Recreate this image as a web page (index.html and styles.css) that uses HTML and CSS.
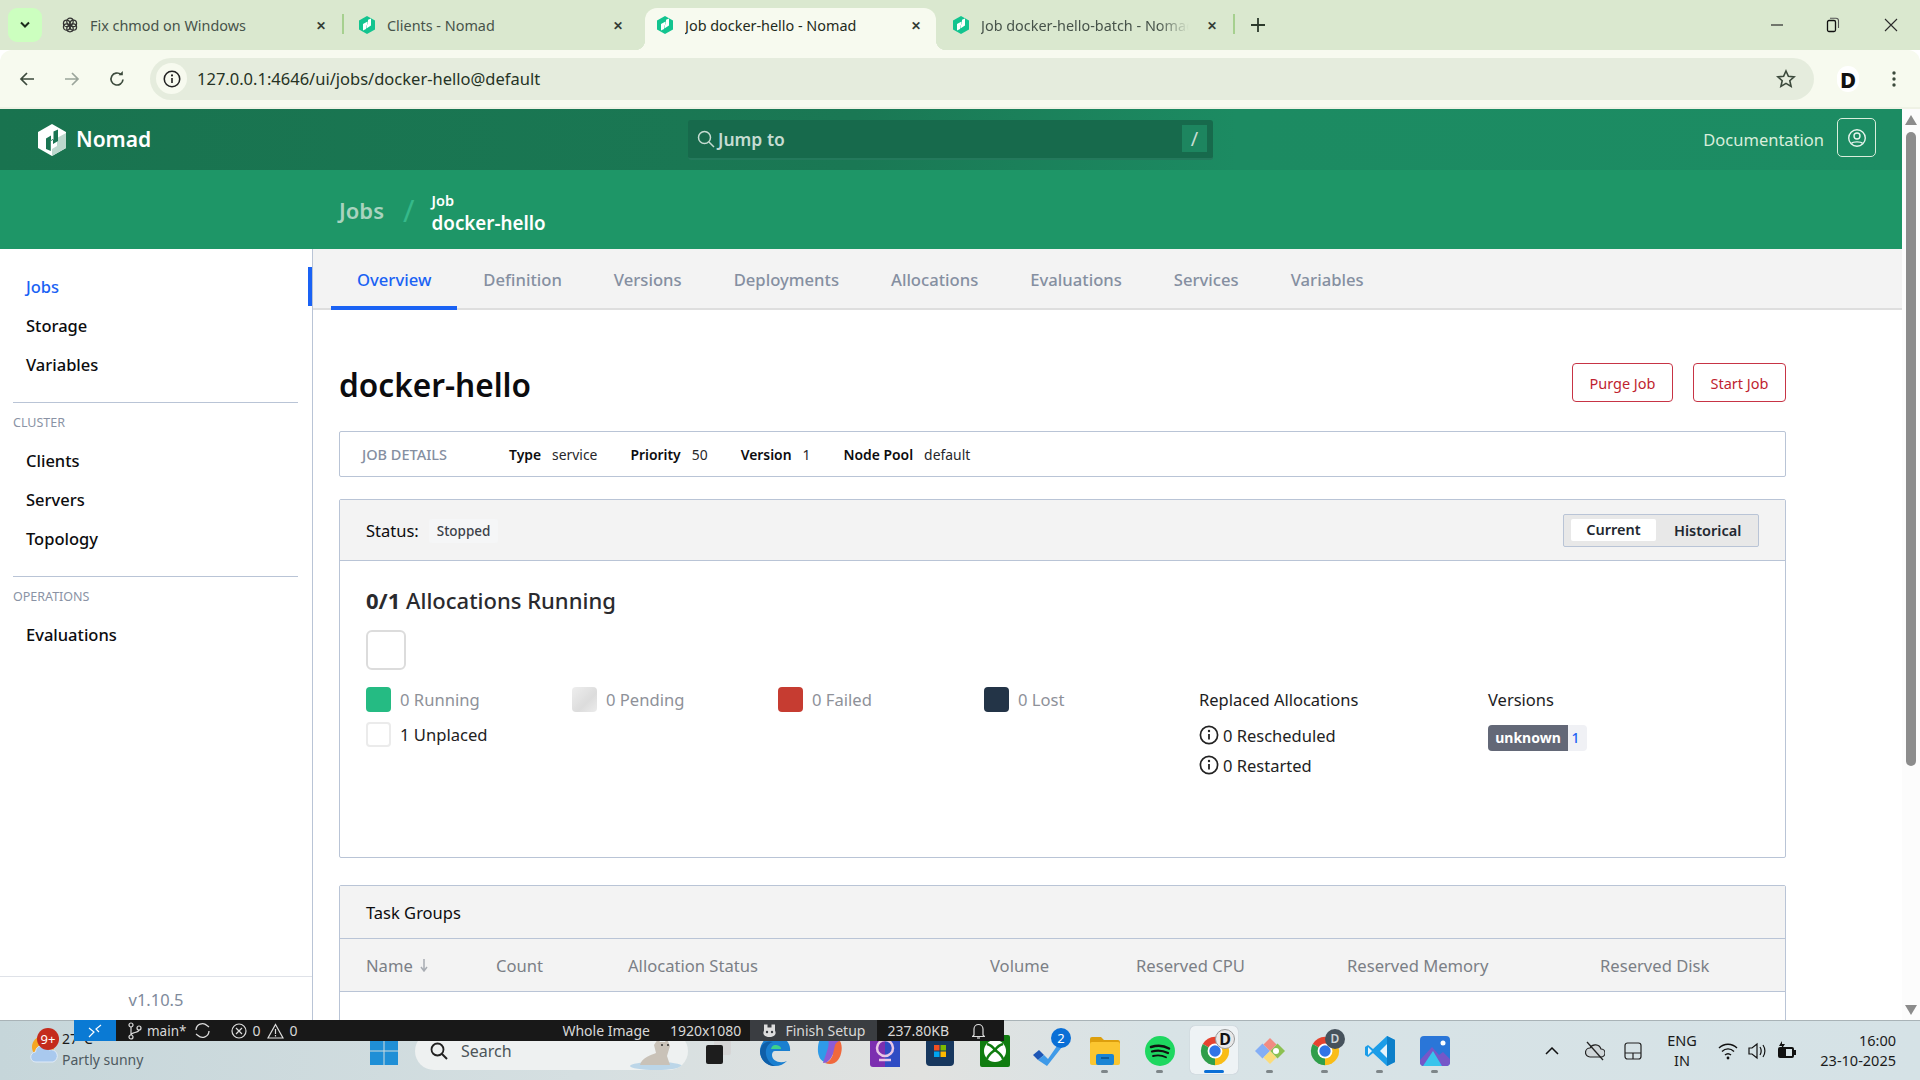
FILE: index.html
```html
<!DOCTYPE html>
<html lang="en">
<head>
  <meta charset="UTF-8" />
  <title>Job docker-hello - Nomad</title>
  <link rel="stylesheet" href="styles.css">
</head>
<body>

  <svg class="sprite" width="0" height="0">
    <symbol id="fav" viewBox="0 0 16 18">
      <polygon points="8,0 16,4.5 16,13.5 8,18 0,13.5 0,4.5" fill="#12c48f"/>
      <path d="M4 14.5V8L8.6 5.4V8.6L9 8.4V3.8L12 2.6V9.5L7.4 12.4V9.3L7 9.5V13Z" fill="#fff"/>
    </symbol>
    <symbol id="chrome" viewBox="0 0 48 48">
      <path d="M24 24L6.7 14A20 20 0 0 1 41.3 14Z" fill="#e5432f"/>
      <path d="M24 24L24 44A20 20 0 0 1 6.7 14Z" fill="#2f9e4a"/>
      <path d="M24 24L41.3 14A20 20 0 0 1 24 44Z" fill="#f9bd17"/>
      <circle cx="24" cy="24" r="10.5" fill="#fff"/>
      <circle cx="24" cy="24" r="8" fill="#2f74e6"/>
    </symbol>
    <symbol id="info" viewBox="0 0 20 20">
      <circle cx="10" cy="10" r="8.6" fill="none" stroke="currentColor" stroke-width="1.7"/>
      <path d="M10 9v5.5" stroke="currentColor" stroke-width="1.8"/>
      <circle cx="10" cy="6" r="1.2" fill="currentColor"/>
    </symbol>
  </svg>

  <header class="tabstrip">
    <button class="tab-search">
      <svg width="12" height="8" viewBox="0 0 12 8"><path d="M2 1.5l4 4 4-4" fill="none" stroke="#1c2b1c" stroke-width="2"/></svg>
    </button>
    <div class="tab tab-sep">
      <svg class="tab-icon" viewBox="0 0 20 20"><g fill="none" stroke="#333" stroke-width="1.6"><circle cx="10" cy="5.5" r="4"/><circle cx="5.8" cy="8" r="4"/><circle cx="5.8" cy="12.5" r="4"/><circle cx="10" cy="14.5" r="4"/><circle cx="14.2" cy="12.5" r="4"/><circle cx="14.2" cy="8" r="4"/></g></svg>
      <span class="tab-title">Fix chmod on Windows</span>
      <span class="tab-close">✕</span>
    </div>
    <div class="tab">
      <svg class="tab-icon"><use href="#fav"/></svg>
      <span class="tab-title">Clients - Nomad</span>
      <span class="tab-close">✕</span>
    </div>
    <div class="tab tab-active">
      <svg class="tab-icon"><use href="#fav"/></svg>
      <span class="tab-title">Job docker-hello - Nomad</span>
      <span class="tab-close">✕</span>
    </div>
    <div class="tab tab-sep">
      <svg class="tab-icon"><use href="#fav"/></svg>
      <span class="tab-title tab-fade">Job docker-hello-batch - Nomad</span>
      <span class="tab-close">✕</span>
    </div>
    <svg class="tab-new" width="14" height="14" viewBox="0 0 14 14"><path d="M7 0v14M0 7h14" stroke="#2c3a2c" stroke-width="1.8"/></svg>
    <div class="win-controls">
      <svg class="win-min" width="14" height="14" viewBox="0 0 14 14"><path d="M1 7h12" stroke="#2a2a2a" stroke-width="1.2"/></svg>
      <svg width="14" height="16" viewBox="0 0 14 16"><rect x="1.5" y="3.5" width="8" height="11" rx="1.5" fill="none" stroke="#111" stroke-width="1.3"/><path d="M4 1.2h6a2.5 2.5 0 0 1 2.5 2.5V11" fill="none" stroke="#555" stroke-width="1.1"/></svg>
      <svg class="win-close" width="14" height="14" viewBox="0 0 14 14"><path d="M1 1l12 12M13 1L1 13" stroke="#2a2a2a" stroke-width="1.1"/></svg>
    </div>
  </header>

  <div class="toolbar">
    <svg class="tool" width="18" height="18" viewBox="0 0 18 18"><path d="M16 9H3M9 3L3 9l6 6" fill="none" stroke="#3c4a3c" stroke-width="1.7"/></svg>
    <svg class="tool" width="18" height="18" viewBox="0 0 18 18"><path d="M2 9h13M9 3l6 6-6 6" fill="none" stroke="#9ba59b" stroke-width="1.7"/></svg>
    <svg class="tool" width="18" height="18" viewBox="0 0 18 18"><path d="M15 9.5A6 6 0 1 1 13 4.5" fill="none" stroke="#3c4a3c" stroke-width="1.7"/><path d="M10.5 5.2h4.3V1z" fill="#3c4a3c"/></svg>
    <div class="urlbar">
      <span class="url-info"><svg width="18" height="18"><use href="#info"/></svg></span>
      <span class="url-text">127.0.0.1:4646/ui/jobs/docker-hello@default</span>
      <svg class="url-star" width="20" height="20" viewBox="0 0 20 20"><path d="M10 2l2.4 5.3 5.7.6-4.3 3.8 1.3 5.7-5.1-3-5.1 3 1.3-5.7L1.9 7.9l5.7-.6z" fill="none" stroke="#3c4a3c" stroke-width="1.6"/></svg>
    </div>
    <span class="profile">D</span>
    <svg class="menu-dots" width="4" height="18" viewBox="0 0 4 18"><circle cx="2" cy="3" r="1.7" fill="#3c4a3c"/><circle cx="2" cy="9" r="1.7" fill="#3c4a3c"/><circle cx="2" cy="15" r="1.7" fill="#3c4a3c"/></svg>
  </div>

  <div class="viewport">
    <div class="app">
      <nav class="topnav">
        <div class="brand">
          <svg width="28" height="32" viewBox="0 0 28 32">
            <polygon points="14,0 28,8 28,24 14,32 0,24 0,8" fill="#fff"/>
            <polygon points="14,32 28,24 28,9 19,14 19,22 14,25" fill="#bcd8cd"/>
            <path d="M8 25V14.5L13 11.5V17L15.5 15.5V7.5L20 5.5V17L15 20V15L12.8 16.3V27Z" fill="#1a7452"/>
          </svg>
          <span class="brand-name">Nomad</span>
        </div>
        <div class="jump">
          <svg width="18" height="18" viewBox="0 0 18 18"><circle cx="7.5" cy="7.5" r="6" fill="none" stroke="#c6dcd2" stroke-width="1.5"/><path d="M12 12l5 5" stroke="#c6dcd2" stroke-width="1.5"/></svg>
          <span class="jump-label">Jump to</span>
          <span class="jump-key">/</span>
        </div>
        <a class="doc-link">Documentation</a>
        <button class="user-btn">
          <svg width="20" height="20" viewBox="0 0 20 20"><g fill="none" stroke="#e6f3ec" stroke-width="1.4"><circle cx="10" cy="10" r="8.3"/><circle cx="10" cy="8" r="3"/><path d="M4.5 15.5c1.5-2.2 9.5-2.2 11 0"/></g></svg>
        </button>
      </nav>

      <div class="crumbs">
        <span class="crumb-root">Jobs</span>
        <span class="crumb-slash">/</span>
        <div class="crumb-current">
          <span class="crumb-kind">Job</span>
          <span class="crumb-name">docker-hello</span>
        </div>
      </div>

      <div class="columns">
        <aside class="sidebar">
          <div class="side-links">
            <a class="side-link is-active">Jobs</a>
            <a class="side-link">Storage</a>
            <a class="side-link">Variables</a>
            <div class="side-rule"></div>
            <p class="side-label">CLUSTER</p>
            <a class="side-link">Clients</a>
            <a class="side-link">Servers</a>
            <a class="side-link">Topology</a>
            <div class="side-rule"></div>
            <p class="side-label">OPERATIONS</p>
            <a class="side-link">Evaluations</a>
          </div>
          <div class="side-version">v1.10.5</div>
        </aside>

        <main class="main">
          <div class="tabs">
            <a class="tabs-item is-active">Overview</a>
            <a class="tabs-item">Definition</a>
            <a class="tabs-item">Versions</a>
            <a class="tabs-item">Deployments</a>
            <a class="tabs-item">Allocations</a>
            <a class="tabs-item">Evaluations</a>
            <a class="tabs-item">Services</a>
            <a class="tabs-item">Variables</a>
          </div>

          <section class="content">
            <div class="title-row">
              <h1>docker-hello</h1>
              <button class="btn-danger">Purge Job</button>
              <button class="btn-danger">Start Job</button>
            </div>

            <div class="details">
              <span class="details-label">JOB DETAILS</span>
              <span class="pair"><b>Type</b>service</span>
              <span class="pair"><b>Priority</b>50</span>
              <span class="pair"><b>Version</b>1</span>
              <span class="pair"><b>Node Pool</b>default</span>
            </div>

            <div class="card status-card">
              <div class="card-head status-head">
                <span>Status:</span>
                <span class="status-badge">Stopped</span>
                <div class="toggle">
                  <span class="toggle-on">Current</span>
                  <span class="toggle-off">Historical</span>
                </div>
              </div>
              <div class="card-body">
                <h3><b>0/1</b> Allocations Running</h3>
                <div class="alloc-bar"></div>
                <div class="legend">
                  <div class="legend-grid">
                    <div class="legend-item"><i class="swatch running"></i>0 Running</div>
                    <div class="legend-item"><i class="swatch pending"></i>0 Pending</div>
                    <div class="legend-item"><i class="swatch failed"></i>0 Failed</div>
                    <div class="legend-item"><i class="swatch lost"></i>0 Lost</div>
                    <div class="legend-item is-on"><i class="swatch unplaced"></i>1 Unplaced</div>
                  </div>
                  <div class="replaced">
                    <div class="legend-title">Replaced Allocations</div>
                    <div class="replaced-row"><svg width="20" height="20"><use href="#info"/></svg>0 Rescheduled</div>
                    <div class="replaced-row"><svg width="20" height="20"><use href="#info"/></svg>0 Restarted</div>
                  </div>
                  <div class="versions">
                    <div class="legend-title">Versions</div>
                    <div class="version-tag"><span class="version-name">unknown</span><span class="version-count">1</span></div>
                  </div>
                </div>
              </div>
            </div>

            <div class="card task-card">
              <div class="card-head task-head">Task Groups</div>
              <div class="task-cols">
                <span>Name <svg class="sort-arrow" width="8" height="13" viewBox="0 0 8 13"><path d="M4 0v11M1 8l3 4 3-4" fill="none" stroke="#a8acb3" stroke-width="1.5"/></svg></span>
                <span>Count</span>
                <span>Allocation Status</span>
                <span>Volume</span>
                <span>Reserved CPU</span>
                <span>Reserved Memory</span>
                <span>Reserved Disk</span>
              </div>
            </div>
          </section>
        </main>
      </div>
    </div>

    <div class="scrollbar">
      <i class="arrow-up"></i>
      <div class="scroll-thumb"></div>
      <i class="arrow-down"></i>
    </div>
  </div>

  <footer class="taskbar">
    <div class="weather">
      <svg width="32" height="30" viewBox="0 0 32 30"><circle cx="15" cy="12" r="11" fill="#f5a623"/><path d="M8 27a5 5 0 0 1-.5-10A7 7 0 0 1 21 15a5.5 5.5 0 0 1 4 12z" fill="#a9c9ee" stroke="#dfeaf7"/></svg>
      <div class="weather-text">
        <span>27°C</span>
        <span class="weather-sub">Partly sunny</span>
      </div>
      <span class="weather-badge">9+</span>
    </div>

    <div class="task-center">
      <div class="task-app">
        <svg width="28" height="28" viewBox="0 0 28 28"><g fill="#1f8fd6"><rect width="13.5" height="13.5"/><rect x="14.5" width="13.5" height="13.5"/><rect y="14.5" width="13.5" height="13.5"/><rect x="14.5" y="14.5" width="13.5" height="13.5"/></g></svg>
      </div>
      <div class="search-pill">
        <svg width="18" height="18" viewBox="0 0 18 18"><circle cx="7.5" cy="7.5" r="6" fill="none" stroke="#222" stroke-width="1.8"/><path d="M12 12l5 5" stroke="#222" stroke-width="2"/></svg>
        <span>Search</span>
        <svg class="search-art" width="56" height="38" viewBox="0 0 56 38"><ellipse cx="30" cy="34" rx="26" ry="4" fill="#bcd6e8"/><path d="M14 33c2-8 12-10 16-12l-2-8 4-6 2 3h5l2-3 3 7-3 10 3 9z" fill="#c9c2b8"/><circle cx="36" cy="13" r="1" fill="#333"/><circle cx="42" cy="13" r="1" fill="#333"/></svg>
      </div>
      <div class="task-app task-view">
        <svg width="28" height="28" viewBox="0 0 28 28"><rect x="10" y="1" width="17" height="17" rx="2" fill="#d6d6d6"/><rect x="2" y="8" width="17" height="19" rx="2" fill="#1d1d1d"/></svg>
      </div>
      <div class="task-icons">
        <div class="task-app">
          <svg width="32" height="32" viewBox="0 0 32 32"><path d="M16 1C7 1 1 8 1 16c0 9 7 15 15 15 5 0 9-2 12-5-7 3-15 0-15-6 0-2 1-4 3-4h15c1-8-5-15-15-15z" fill="#1a7fd0"/><path d="M1 16C2 8 9 5 14 7c-4 1-6 4-7 8-1 7 3 13 9 16C8 31 1 25 1 16z" fill="#0f5fa8"/><path d="M16 10c3 0 6 1 6 4H12c1-3 2-4 4-4z" fill="#3fd18a"/></svg>
        </div>
        <div class="task-app">
          <svg width="30" height="32" viewBox="0 0 30 32"><path d="M5 4c3-3 7-3 10 0 2 2 1 6 0 10l-3 14c-3-1-7-3-8-7-2-5-1-13 1-17z" fill="#2f9be8"/><path d="M12 2c5-2 11 0 13 4l-9 17c-2 3-5 5-8 5l5-15c1-4 1-8-1-11z" fill="#8b5cd6"/><path d="M25 6c3 5 2 14-2 19-3 4-8 5-13 3 4-1 7-5 8-9l2-9c1-2 3-4 5-4z" fill="#f0683c"/></svg>
        </div>
        <div class="task-app">
          <svg width="30" height="32" viewBox="0 0 30 32"><rect width="30" height="32" rx="3" fill="#7c2fb0"/><rect x="15" width="15" height="32" fill="#2f4cc4"/><circle cx="15" cy="13" r="8" fill="none" stroke="#e8c7e6" stroke-width="2.5"/><path d="M9 25h12" stroke="#e8c7e6" stroke-width="2.5"/></svg>
        </div>
        <div class="task-app">
          <svg width="28" height="30" viewBox="0 0 28 30"><rect y="2" width="28" height="28" rx="4" fill="#17375e"/><rect x="8" y="9" width="5.5" height="5.5" fill="#f25022"/><rect x="14.5" y="9" width="5.5" height="5.5" fill="#7fba00"/><rect x="8" y="15.5" width="5.5" height="5.5" fill="#00a4ef"/><rect x="14.5" y="15.5" width="5.5" height="5.5" fill="#ffb900"/></svg>
        </div>
        <div class="task-app">
          <svg width="30" height="32" viewBox="0 0 30 32"><rect width="30" height="32" rx="2" fill="#107c10"/><circle cx="15" cy="16" r="11" fill="#fff"/><path d="M7 9c4 1 6 3 8 6 2-3 4-5 8-6M7 24c1-4 4-6 8-9 4 3 7 5 8 9" fill="none" stroke="#107c10" stroke-width="2.5"/></svg>
        </div>
        <div class="task-app">
          <svg class="todo-icon" width="30" height="26" viewBox="0 0 30 26"><path d="M1 15l6-5 5 5-6 5z" fill="#1e56b5"/><path d="M6 20l6-5 4 4L27 3l3 4-15 19z" fill="#3f9ae8"/></svg>
          <span class="app-badge app-badge-blue">2</span>
        </div>
        <div class="task-app has-dot">
          <svg width="30" height="28" viewBox="0 0 30 28"><path d="M0 2a2 2 0 0 1 2-2h9l3 3h14a2 2 0 0 1 2 2v4H0z" fill="#dd9f0d"/><rect y="5" width="30" height="23" rx="2" fill="#fbc630"/><rect x="6" y="17" width="18" height="11" rx="2" fill="#1a84d4"/><path d="M11 21h8" stroke="#0d4f86" stroke-width="1.5"/></svg>
        </div>
        <div class="task-app has-dot">
          <svg width="30" height="30" viewBox="0 0 30 30"><circle cx="15" cy="15" r="15" fill="#1ed760"/><g fill="none" stroke="#111" stroke-linecap="round"><path d="M6 11c6-2 13-1.5 18 1.5" stroke-width="2.5"/><path d="M7 15.5c5-1.5 11-1 16 1.5" stroke-width="2.2"/><path d="M8 20c5-1.2 9-.8 13 1.3" stroke-width="1.8"/></g></svg>
        </div>
        <div class="task-app has-dot is-running">
          <svg width="34" height="34"><use href="#chrome"/></svg>
          <span class="app-badge app-badge-d">D</span>
        </div>
        <div class="task-app has-dot">
          <svg width="30" height="30" viewBox="0 0 30 30"><path d="M15 15L7.5 7.5 0 15l7.5 7.5z" fill="#84aef5"/><path d="M15 15l7.5-7.5L30 15l-7.5 7.5z" fill="#8cc152"/><path d="M15 15l-6.5 6.5L15 28l6.5-6.5z" fill="#fbdc7a"/><path d="M15 15L8.5 8.5 15 2l6.5 6.5z" fill="#f28b82"/><circle cx="21" cy="15" r="3" fill="#fff"/></svg>
        </div>
        <div class="task-app has-dot">
          <svg width="34" height="34"><use href="#chrome"/></svg>
          <span class="app-badge app-badge-gray">D</span>
        </div>
        <div class="task-app has-dot">
          <svg width="30" height="30" viewBox="0 0 30 30"><path d="M22 0l8 4v22l-8 4-14-13-5 4-3-2v-8l3-2 5 4z" fill="#1c9de8"/><path d="M22 8l-7 7 7 7z" fill="#e6f3fb"/><path d="M22 0l8 4v22l-8 4z" fill="#0d7fc9"/><path d="M3 11l4 4-4 4z" fill="#e6f3fb"/></svg>
        </div>
        <div class="task-app has-dot">
          <svg width="30" height="30" viewBox="0 0 30 30"><rect width="30" height="30" rx="4" fill="#2a76d8"/><path d="M0 24L12 11l7 8 4-3 7 7v3a4 4 0 0 1-4 4H4a4 4 0 0 1-4-4z" fill="#7657c8"/><path d="M3 30L13 15l9 15z" fill="#38c4ec"/><circle cx="23" cy="7" r="2.5" fill="#fff"/></svg>
        </div>
      </div>
    </div>

    <div class="tray">
      <svg class="tray-caret" width="14" height="8" viewBox="0 0 14 8"><path d="M1 7l6-6 6 6" fill="none" stroke="#111" stroke-width="1.5"/></svg>
      <svg class="tray-cloud" width="20" height="22" viewBox="0 0 20 22"><path d="M5 17a4 4 0 0 1 0-9 6 6 0 0 1 11 1 4 4 0 0 1 0 8z" fill="#cfd6d9" stroke="#222" stroke-width="1.2"/><path d="M2 2l16 18" stroke="#222" stroke-width="1.3"/></svg>
      <svg class="tray-pad" width="18" height="18" viewBox="0 0 18 18"><rect x="1" y="1" width="16" height="16" rx="2.5" fill="none" stroke="#222" stroke-width="1.2"/><path d="M1 11h16M9 11v6" stroke="#222" stroke-width="1.2"/></svg>
      <div class="tray-lang"><span>ENG</span><span>IN</span></div>
      <svg class="tray-wifi" width="20" height="18" viewBox="0 0 20 18"><g fill="none" stroke="#111" stroke-width="1.4"><path d="M1 6c5-5 13-5 18 0"/><path d="M4 9.5c3.5-3.5 8.5-3.5 12 0"/><path d="M7 13c1.8-1.6 4.2-1.6 6 0"/></g><circle cx="10" cy="16" r="1.4" fill="#111"/></svg>
      <svg class="tray-vol" width="20" height="20" viewBox="0 0 20 20"><path d="M1 7h3l5-4v14l-5-4H1z" fill="none" stroke="#111" stroke-width="1.2"/><path d="M12 6c1.5 2.5 1.5 5.5 0 8M15 4c2.5 3.5 2.5 8.500 0 12" fill="none" stroke="#111" stroke-width="1.2"/></svg>
      <svg class="tray-batt" width="20" height="20" viewBox="0 0 20 20"><rect x="1" y="6" width="16" height="11" rx="2" fill="#111"/><rect x="17" y="9" width="2" height="5" fill="#111"/><rect x="9" y="8" width="6" height="7" fill="#d9e4e7"/><path d="M5 0L2 5h3l-1 4 4-6H5z" fill="#111"/></svg>
      <div class="tray-clock"><span>16:00</span><span>23-10-2025</span></div>
    </div>
  </footer>

  <div class="ext-status">
    <span class="ext-remote">
      <svg width="14" height="14" viewBox="0 0 14 14"><path d="M1 4l5 4-5 5M13 1L8 5l3 3" fill="none" stroke="#fff" stroke-width="1.2"/></svg>
    </span>
    <svg class="ext-branch" width="14" height="18" viewBox="0 0 14 18"><g fill="none" stroke="#ddd" stroke-width="1.2"><circle cx="3" cy="3" r="2"/><circle cx="3" cy="15" r="2"/><circle cx="11" cy="6" r="2"/><path d="M3 5v8M11 8c0 3-8 2-8 5"/></g></svg>
    <span class="ext-main">main*</span>
    <svg class="ext-sync" width="17" height="17" viewBox="0 0 17 17"><g fill="none" stroke="#ddd" stroke-width="1.3"><path d="M2 8a6.5 6.5 0 0 1 11-4.5L15 5"/><path d="M15 9a6.5 6.5 0 0 1-11 4.5L2 12"/></g></svg>
    <svg class="ext-err" width="16" height="16" viewBox="0 0 16 16"><circle cx="8" cy="8" r="7" fill="none" stroke="#ddd" stroke-width="1.2"/><path d="M5 5l6 6M11 5l-6 6" stroke="#ddd" stroke-width="1.2"/></svg>
    <span class="ext-num">0</span>
    <svg class="ext-warn" width="17" height="16" viewBox="0 0 17 16"><path d="M8.5 1.5L16 15H1z" fill="none" stroke="#ddd" stroke-width="1.2"/><path d="M8.5 6v5M8.5 12v1.5" stroke="#ddd" stroke-width="1.2"/></svg>
    <span class="ext-num">0</span>
    <span class="ext-whole">Whole Image</span>
    <span class="ext-size">1920x1080</span>
    <span class="ext-setup">
      <svg width="15" height="15" viewBox="0 0 15 15"><path d="M2 1.5h3.5v3h4v-3H13v6c2 4-1 6.5-5.5 6.5S0 11.5 2 7.5z" fill="#ddd"/><circle cx="5" cy="9" r="1.2" fill="#3a3d41"/><circle cx="10" cy="9" r="1.2" fill="#3a3d41"/></svg>
      Finish Setup
    </span>
    <span class="ext-kb">237.80KB</span>
    <svg class="ext-bell" width="13" height="16" viewBox="0 0 13 16"><path d="M2 12V6a4.5 4.5 0 0 1 9 0v6l1.5 1.5H.5z" fill="none" stroke="#ddd" stroke-width="1.2"/><path d="M5 15h3" stroke="#ddd" stroke-width="1.2"/></svg>
  </div>

</body>
</html>
```

FILE: styles.css
```css
* {
  box-sizing: border-box;
}

html, body {
  margin: 0;
  height: 1080px;
  overflow: hidden;
}

body {
  display: flex;
  flex-direction: column;
  position: relative;
  width: 1920px;
  font-family: "Noto Sans", "Open Sans", sans-serif;
  color: #0c0c0e;
  background: #fff;
}

.sprite {
  position: absolute;
}

h1, h3, p {
  margin: 0;
}

button {
  font: inherit;
  cursor: pointer;
}

/* browser tab strip */
.tabstrip {
  flex: 0 0 50px;
  display: flex;
  align-items: flex-end;
  background: #dae8cf;
  position: relative;
}

.tab-search {
  position: absolute;
  left: 8px;
  top: 8px;
  width: 34px;
  height: 34px;
  border: none;
  border-radius: 9px;
  background: #ccffbf;
  display: flex;
  align-items: center;
  justify-content: center;
  padding: 0;
}

.tab {
  width: 291px;
  height: 42px;
  margin-right: 6px;
  display: flex;
  align-items: center;
  padding: 0 0 8px 12px;
  position: relative;
  font-size: 14.4px;
  color: #47534a;
  white-space: nowrap;
}

.tab:first-of-type {
  margin-left: 50px;
}

.tab-sep::after {
  content: "";
  position: absolute;
  right: -3px;
  top: 6px;
  height: 20px;
  width: 2px;
  background: #a6d08f;
}

.tab-active {
  background: #f7faef;
  border-radius: 12px 12px 0 0;
  color: #1f2a20;
  margin-left: 1px;
  margin-right: 5px;
}

.tab-active::before,
.tab-active::after {
  content: "";
  position: absolute;
  bottom: 0;
  width: 10px;
  height: 10px;
}

.tab-active::before {
  left: -10px;
  background: radial-gradient(circle at 0 0, transparent 10px, #f7faef 10.5px);
}

.tab-active::after {
  right: -10px;
  background: radial-gradient(circle at 100% 0, transparent 10px, #f7faef 10.5px);
}

.tab-icon {
  width: 16px;
  height: 18px;
  flex: none;
}

.tab-title {
  margin-left: 12px;
  width: 212px;
  overflow: hidden;
}

.tab-fade {
  -webkit-mask-image: linear-gradient(to right, #000 85%, transparent 100%);
  mask-image: linear-gradient(to right, #000 85%, transparent 100%);
  width: 208px;
}

.tab-close {
  margin-left: auto;
  margin-right: 15px;
  font-size: 12px;
  font-weight: 700;
  color: #333d35;
}

.tab-new {
  position: absolute;
  left: 1251px;
  top: 18px;
}

.win-controls {
  position: absolute;
  right: 22px;
  top: 17px;
  display: flex;
  gap: 41px;
  align-items: center;
}

.win-min {
  margin-right: 1px;
}

.win-close {
  margin-left: 3px;
}

/* browser toolbar */
.toolbar {
  flex: 0 0 59px;
  display: flex;
  align-items: center;
  background: #f7faef;
  border-bottom: 2px solid #eff2e5;
  border-radius: 12px 12px 0 0;
  padding: 0 0 0 18px;
}

.tool {
  margin-right: 27px;
  flex: none;
}

.urlbar {
  width: 1664px;
  height: 42px;
  margin-left: -3px;
  display: flex;
  align-items: center;
  background: #e5ecdd;
  border-radius: 21px;
  padding: 0 18px 0 6px;
}

.url-info {
  width: 31px;
  height: 31px;
  border-radius: 50%;
  background: #f7faef;
  display: flex;
  align-items: center;
  justify-content: center;
  color: #222;
}

.url-text {
  margin-left: 10px;
  font-size: 16.5px;
  color: #253325;
}

.url-star {
  margin-left: auto;
}

.profile {
  margin-left: 23px;
  width: 22px;
  height: 26px;
  background: #fff;
  border-radius: 11px;
  font-weight: 800;
  font-size: 22px;
  line-height: 26px;
  text-align: center;
  color: #111;
}

.menu-dots {
  margin-left: 33px;
}

/* page + scrollbar */
.viewport {
  flex: 0 0 911px;
  display: flex;
  min-height: 0;
}

.app {
  width: 1902px;
  display: flex;
  flex-direction: column;
  min-height: 0;
}

.scrollbar {
  width: 18px;
  background: #fcfcfc;
  display: flex;
  flex-direction: column;
  align-items: center;
  padding: 6px 0 5px;
}

.arrow-up {
  width: 0;
  height: 0;
  border: 6px solid transparent;
  border-top: none;
  border-bottom: 10px solid #8c8c8c;
}

.arrow-down {
  width: 0;
  height: 0;
  margin-top: auto;
  border: 6px solid transparent;
  border-bottom: none;
  border-top: 10px solid #8c8c8c;
}

.scroll-thumb {
  width: 10px;
  height: 634px;
  margin-top: 7px;
  background: #8c8c8c;
  border-radius: 5px;
}

/* nomad nav */
.topnav {
  flex: 0 0 61px;
  display: flex;
  align-items: center;
  padding: 0 26px 0 38px;
  background: linear-gradient(to right, #19734f 0%, #1a7854 45%, #1c8b62 65%, #1c8c63 100%);
}

.brand {
  width: 650px;
  display: flex;
  align-items: center;
  gap: 10px;
  color: #fff;
  font-size: 21px;
  font-weight: 600;
}

.brand-name {
  margin-top: -2px;
}

.jump {
  width: 525px;
  height: 40px;
  display: flex;
  align-items: center;
  padding: 0 6px 0 9px;
  background: #176a4c;
  border-bottom: 2px solid #24795c;
  border-radius: 3px;
}

.jump-label {
  margin-left: 3px;
  font-size: 17.5px;
  font-weight: 600;
  color: #c6dcd2;
}

.jump-key {
  margin-left: auto;
  width: 25px;
  height: 27px;
  background: #1d855f;
  color: #c6dcd2;
  font-size: 20px;
  line-height: 28px;
  text-align: center;
}

.doc-link {
  margin-left: auto;
  font-size: 16.5px;
  color: #d9eedc;
}

.user-btn {
  margin-left: 13px;
  width: 39px;
  height: 39px;
  padding: 0;
  background: transparent;
  border: 1px solid #d9eedc;
  border-radius: 5px;
  display: flex;
  align-items: center;
  justify-content: center;
  margin-top: -4px;
}

.crumbs {
  flex: 0 0 79px;
  display: flex;
  align-items: center;
  padding-left: 339px;
  background: #1e9667;
}

.crumb-root {
  font-size: 22px;
  font-weight: 600;
  color: #a9d3bf;
}

.crumb-slash {
  margin: 0 17px 0 19px;
  font-size: 31px;
  color: #35b98a;
}

.crumb-current {
  display: flex;
  flex-direction: column;
  color: #fff;
  font-weight: 600;
  margin-top: 8px;
}

.crumb-kind {
  font-size: 14.5px;
  line-height: 19px;
}

.crumb-name {
  font-size: 18.8px;
  line-height: 26px;
}

/* sidebar */
.columns {
  flex: 1;
  display: flex;
  min-height: 0;
}

.sidebar {
  flex: 0 0 313px;
  display: flex;
  flex-direction: column;
  border-right: 1px solid #b9c4d6;
}

.side-links {
  flex: 1;
  padding-top: 18px;
}

.side-link {
  display: block;
  height: 39.2px;
  line-height: 39.2px;
  padding-left: 26px;
  font-size: 16.5px;
  font-weight: 500;
  position: relative;
}

.side-link.is-active {
  color: #1a62f4;
}

.side-link.is-active::after {
  content: "";
  position: absolute;
  right: 0;
  top: 0;
  width: 4px;
  height: 39px;
  background: #1a62f4;
}

.side-rule {
  height: 1px;
  margin: 17.5px 14px 0 13px;
  background: #b9c4d6;
}

.side-label {
  padding: 10px 0 0 13px;
  height: 38px;
  font-size: 12.5px;
  line-height: 20px;
  color: #8a93a5;
}

.side-version {
  flex: 0 0 44px;
  padding-top: 2px;
  border-top: 1px solid #dfe2e8;
  text-align: center;
  font-size: 16.5px;
  line-height: 41px;
  color: #7e8a9b;
}

/* main */
.main {
  flex: 1;
  min-width: 0;
  overflow: hidden;
}

.tabs {
  height: 61px;
  display: flex;
  padding-left: 18px;
  background: #f3f3f3;
  border-bottom: 2px solid #dedede;
}

.tabs-item {
  padding: 0 26px;
  height: 61px;
  line-height: 62px;
  font-size: 16.65px;
  font-weight: 500;
  color: #858fa1;
}

.tabs-item.is-active {
  color: #1a62f4;
  border-bottom: 4px solid #1a62f4;
}

.content {
  padding: 53px 116px 0 26px;
}

.title-row {
  height: 39px;
  display: flex;
  align-items: center;
  gap: 20px;
}

.title-row h1 {
  margin-right: auto;
  font-size: 31.6px;
  font-weight: 600;
  margin-top: 3px;
}

.btn-danger {
  height: 39px;
  padding: 0 16.5px;
  background: #fff;
  border: 1px solid #c73445;
  border-radius: 4px;
  font-size: 14.5px;
  color: #c01f30;
}

.details {
  height: 46px;
  margin-top: 29px;
  display: flex;
  align-items: center;
  padding-left: 22px;
  border: 1px solid #b9c4d6;
  border-radius: 2px;
  font-size: 13.9px;
  color: #27272a;
}

.details-label {
  width: 147px;
  font-size: 14.5px;
  font-weight: 500;
  color: #858fa1;
}

.pair {
  margin-right: 33px;
}

.pair b {
  font-weight: 600;
  color: #0c0c0e;
  margin-right: 11px;
}

.card {
  border: 1px solid #b9c4d6;
  border-radius: 2px;
}

.card-head {
  background: #f3f3f3;
  border-bottom: 1px solid #b9c4d6;
  display: flex;
  align-items: center;
  padding: 0 26px;
  font-size: 16.5px;
}

.status-card {
  height: 359px;
  margin-top: 22px;
}

.status-head {
  height: 61px;
}

.status-badge {
  margin-left: 10px;
  padding: 3px 8px;
  margin-top: 1px;
  font-size: 13.5px;
  font-weight: 500;
  color: #3b3f47;
  background: #f5f6f7;
  border-radius: 3px;
}

.toggle {
  margin-left: auto;
  height: 33px;
  width: 196px;
  display: flex;
  align-items: center;
  padding: 0 7px;
  background: #e8e8e8;
  border: 1px solid #b9c4d6;
  border-radius: 2px;
  font-size: 14.5px;
  font-weight: 600;
  color: #222730;
}

.toggle-on {
  width: 85px;
  height: 22px;
  line-height: 21px;
  background: #fff;
  text-align: center;
  border-radius: 2px;
}

.toggle-off {
  margin-left: 18px;
}

.card-body {
  padding: 24px 26px 0;
}

.card-body h3 {
  font-size: 22px;
  font-weight: 500;
  line-height: 30px;
  color: #2a2a2e;
}

.card-body h3 b {
  font-weight: 700;
}

.alloc-bar {
  width: 40px;
  height: 40px;
  margin-top: 15px;
  border: 2px solid #dcdcdc;
  border-radius: 6px;
}

.legend {
  margin-top: 17px;
  display: flex;
}

.legend-grid {
  width: 833px;
  display: grid;
  grid-template-columns: repeat(4, 206px);
  grid-auto-rows: 25px;
  row-gap: 10px;
}

.legend-item {
  display: flex;
  align-items: center;
  gap: 9px;
  font-size: 16.6px;
  color: #8e9199;
}

.legend-item.is-on {
  color: #222;
}

.swatch {
  width: 25px;
  height: 25px;
  border-radius: 4px;
}

.running { background: #25bb83; }
.pending { background: linear-gradient(135deg, #eee, #dcdcdc 60%, #ececec); }
.failed { background: #c63c31; }
.lost { background: #233447; }
.unplaced { border: 2px solid #ebebeb; }

.replaced {
  width: 289px;
}

.legend-title {
  height: 25px;
  line-height: 26px;
  font-size: 16.5px;
  color: #1c1c1e;
}

.replaced-row {
  display: flex;
  align-items: center;
  gap: 4px;
  height: 30px;
  font-size: 16.5px;
  color: #222;
}

.legend-title + .replaced-row {
  margin-top: 8px;
}

.version-tag {
  width: 99px;
  height: 26px;
  margin-top: 13px;
  display: flex;
  background: #f0f1f5;
  border-radius: 4px;
  overflow: hidden;
  font-size: 14px;
  line-height: 26px;
}

.version-name {
  width: 80px;
  background: #636877;
  color: #fff;
  font-weight: 700;
  text-align: center;
}

.version-count {
  flex: 1;
  text-align: center;
  padding-right: 4px;
  font-weight: 500;
  color: #1a62f4;
}

.task-card {
  height: 200px;
  margin-top: 27px;
}

.task-head {
  height: 53px;
}

.task-cols {
  height: 53px;
  padding-left: 26px;
  display: grid;
  grid-template-columns: 130px 132px 362px 146px 211px 253px 1fr;
  align-items: center;
  background: #f3f3f3;
  border-bottom: 1px solid #b9c4d6;
  font-size: 16.6px;
  color: #7b7f86;
}

.sort-arrow {
  margin-left: 3px;
}

/* windows taskbar */
.taskbar {
  flex: 1;
  display: flex;
  position: relative;
  border-top: 1px solid #a9b3b7;
  background: linear-gradient(to right, #c6d6da 0%, #d5dfe1 30%, #e1e2e0 48%, #d8e3e6 60%, #d5e2e6 100%);
  color: #1b1b1b;
}

.weather {
  width: 356px;
  display: flex;
  align-items: flex-start;
  padding: 14px 0 0 28px;
  position: relative;
}

.weather-text {
  display: flex;
  flex-direction: column;
  margin: -7px 0 0 2px;
  font-size: 14px;
  line-height: 21px;
}

.weather-sub {
  color: #4e5a60;
}

.weather-badge {
  position: absolute;
  left: 37px;
  top: 7px;
  width: 22px;
  height: 22px;
  border-radius: 50%;
  background: #c42b1c;
  color: #fff;
  font-size: 13px;
  line-height: 22px;
  text-align: center;
}

.task-center {
  display: flex;
  align-items: center;
  height: 59px;
}

.task-app {
  width: 55px;
  height: 59px;
  display: flex;
  align-items: center;
  justify-content: center;
  position: relative;
  flex: none;
}

.search-pill {
  width: 273px;
  height: 38px;
  margin-left: 4px;
  padding-left: 15px;
  display: flex;
  align-items: center;
  gap: 13px;
  background: #eef1f1;
  border-radius: 19px;
  font-size: 16px;
  color: #4c5458;
  overflow: hidden;
}

.search-art {
  margin-left: auto;
  margin-right: 6px;
}

.task-view {
  margin-left: 2px;
}

.task-icons {
  display: flex;
  margin-left: 2px;
}

.todo-icon {
  margin-left: -6px;
  margin-top: 4px;
}

.has-dot::after {
  content: "";
  position: absolute;
  bottom: 7px;
  left: 24px;
  width: 7px;
  height: 3px;
  border-radius: 2px;
  background: #7e8689;
}

.is-running::before {
  content: "";
  position: absolute;
  left: 3px;
  top: 5px;
  width: 48px;
  height: 48px;
  background: #eef3f5;
  border-radius: 5px;
  box-shadow: 0 0 1px #aab;
}

.is-running svg, .is-running span {
  z-index: 1;
}

.is-running::after {
  left: 17px;
  width: 20px;
  background: #0a6fd6;
  border-radius: 2px;
  z-index: 1;
}

.app-badge {
  position: absolute;
  top: 8px;
  right: 7px;
  width: 20px;
  height: 20px;
  border-radius: 50%;
  color: #fff;
  font-size: 13px;
  line-height: 20px;
  text-align: center;
}

.app-badge-blue {
  background: #0a6fd6;
  top: 7px;
  right: 6px;
}

.app-badge-d {
  background: #e8e8e8;
  border: 1px solid #999;
  color: #111;
  font-size: 16px;
  font-weight: 700;
  line-height: 18px;
}

.app-badge-gray {
  background: #46525c;
  color: #cfd6da;
  font-weight: 600;
  font-size: 12px;
}

.tray {
  margin-left: auto;
  width: 375px;
  position: relative;
  display: flex;
  align-items: center;
  font-size: 14.5px;
  color: #1b1b1b;
}

.tray-caret { margin-left: 0; }
.tray-cloud { margin-left: 26px; }
.tray-pad { margin-left: 19px; }

.tray-lang {
  margin-left: 22px;
  width: 36px;
  display: flex;
  flex-direction: column;
  align-items: center;
  line-height: 20px;
  margin-top: -1px;
}

.tray-wifi { margin-left: 18px; }
.tray-vol { margin-left: 10px; }
.tray-batt { margin-left: 9px; }

.tray-clock {
  margin-left: auto;
  margin-right: 24px;
  display: flex;
  flex-direction: column;
  align-items: flex-end;
  line-height: 20px;
  margin-top: -1px;
}

/* floating screenshot tool status bar */
.ext-status {
  position: absolute;
  left: 74px;
  top: 1020px;
  width: 930px;
  height: 21px;
  background: #181818;
  color: #d8d8d8;
  display: flex;
  align-items: center;
  font-size: 14px;
  white-space: nowrap;
}

.ext-remote {
  width: 42px;
  height: 21px;
  background: #0a7ad4;
  display: flex;
  align-items: center;
  justify-content: center;
}

.ext-branch { margin-left: 12px; }
.ext-main { margin-left: 5px; font-size: 13.5px; }
.ext-sync { margin-left: 8px; }
.ext-err { margin-left: 20px; }
.ext-num { margin-left: 5px; }
.ext-warn { margin-left: 7px; }

.ext-whole {
  margin-left: auto;
}

.ext-size {
  margin-left: 20px;
}

.ext-setup {
  margin-left: 9px;
  height: 21px;
  padding: 0 12px;
  display: flex;
  align-items: center;
  gap: 8px;
  background: #3a3d41;
}

.ext-kb {
  margin-left: 10px;
}

.ext-bell {
  margin: 0 19px 0 23px;
}
```
